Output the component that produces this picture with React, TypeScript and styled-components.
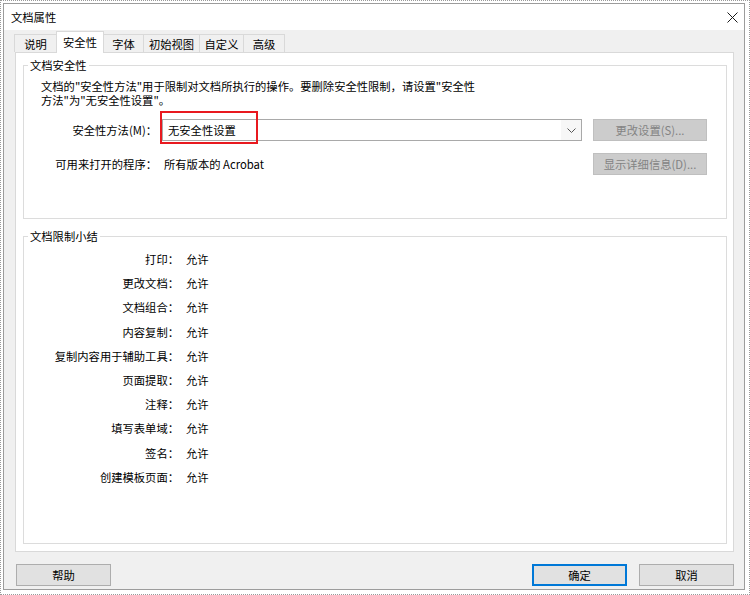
import React from 'react';
import styled, {createGlobalStyle} from "styled-components";

interface TabProps {
    $active?: boolean
    $width: number
}

interface ButtonProps {
    $primary?: boolean
}

const TABS = [
    {label: '说明', width: 43},
    {label: '安全性', width: 48, active: true},
    {label: '字体', width: 41},
    {label: '初始视图', width: 57},
    {label: '自定义', width: 45},
    {label: '高级', width: 42},
]

const RESTRICTIONS = [
    '打印',
    '更改文档',
    '文档组合',
    '内容复制',
    '复制内容用于辅助工具',
    '页面提取',
    '注释',
    '填写表单域',
    '签名',
    '创建模板页面',
]

const App = () => {
    return (
        <Frame>
            <GlobalStyle/>
            <Window>
                <TitleBar>
                    <Title>文档属性</Title>
                    <CloseButton>
                        <svg width="11" height="11" viewBox="0 0 11 11">
                            <path d="M0.5 0.5 L10.5 10.5 M10.5 0.5 L0.5 10.5" stroke="#1a1a1a" strokeWidth="1"/>
                        </svg>
                    </CloseButton>
                </TitleBar>
                <Body>
                    <TabStrip>
                        {
                            TABS.map((tab) => (
                                <Tab key={tab.label} $active={tab.active} $width={tab.width}>{tab.label}</Tab>
                            ))
                        }
                    </TabStrip>
                    <Panel>
                        <GroupBox>
                            <GroupTitle>文档安全性</GroupTitle>
                            <Description>
                                文档的"安全性方法"用于限制对文档所执行的操作。要删除安全性限制，请设置"安全性<br/>
                                方法"为"无安全性设置"。
                            </Description>
                            <SettingsGrid>
                                <FieldLabel>安全性方法(M)：</FieldLabel>
                                <ComboWrap>
                                    <ComboBox>
                                        <ComboText>无安全性设置</ComboText>
                                        <ComboArrow>
                                            <svg width="9" height="5" viewBox="0 0 9 5">
                                                <path d="M0.5 0.5 L4.5 4.5 L8.5 0.5" stroke="#555" strokeWidth="1" fill="none"/>
                                            </svg>
                                        </ComboArrow>
                                    </ComboBox>
                                    <Highlight/>
                                </ComboWrap>
                                <SideButton disabled>更改设置(S)...</SideButton>
                                <FieldLabel>可用来打开的程序：</FieldLabel>
                                <FieldValue>所有版本的 Acrobat</FieldValue>
                                <SideButton disabled>显示详细信息(D)...</SideButton>
                            </SettingsGrid>
                        </GroupBox>
                        <SummaryBox>
                            <GroupTitle>文档限制小结</GroupTitle>
                            <SummaryGrid>
                                {
                                    RESTRICTIONS.map((item) => (
                                        <React.Fragment key={item}>
                                            <SummaryLabel>{item}：</SummaryLabel>
                                            <SummaryValue>允许</SummaryValue>
                                        </React.Fragment>
                                    ))
                                }
                            </SummaryGrid>
                        </SummaryBox>
                    </Panel>
                    <ButtonRow>
                        <DialogButton>帮助</DialogButton>
                        <Spacer/>
                        <DialogButton $primary>确定</DialogButton>
                        <DialogButton>取消</DialogButton>
                    </ButtonRow>
                </Body>
            </Window>
        </Frame>
    );
};

export default App;

const GlobalStyle = createGlobalStyle`
* {
    box-sizing: border-box;
}
body {
    margin: 0;
    background: #ffffff;
    font-family: "Noto Sans CJK SC", "Noto Sans", sans-serif;
    font-size: 11.3px;
    color: #000000;
}
`

const Frame = styled.div`
display: flex;
flex-direction: column;
width: 750px;
height: 595px;
border: 1px dotted #9a9a9a;
padding: 2px 4px 4px 2px;
background: #ffffff;
`

const Window = styled.div`
flex: 1;
display: flex;
flex-direction: column;
border: 1px solid #9c9c9c;
background: #ffffff;
`

const TitleBar = styled.div`
display: flex;
align-items: center;
height: 26px;
padding: 0 6px 0 7px;
background: #ffffff;
`

const Title = styled.div`
flex: 1;
line-height: 16px;
`

const CloseButton = styled.div`
display: flex;
align-items: center;
justify-content: center;
width: 11px;
height: 11px;
`

const Body = styled.div`
flex: 1;
display: flex;
flex-direction: column;
padding: 4px 10px 3px 11px;
background: #f0f0f0;
`

const TabStrip = styled.div`
display: flex;
align-items: flex-end;
height: 18px;
margin-left: -1px;
`

const Tab = styled.div<TabProps>`
display: flex;
align-items: center;
justify-content: center;
width: ${({$width}) => $width}px;
margin-left: -1px;
border: 1px solid #d9d9d9;
border-bottom: none;
line-height: 16px;
white-space: nowrap;
&:first-child {
    margin-left: 0;
}
${({$active}) => $active ? ({
    position: 'relative',
    zIndex: 1,
    height: '22px',
    marginBottom: '-1px',
    paddingBottom: '2px',
    background: '#ffffff',
}) : ({
    height: '18px',
    background: '#f0f0f0',
})};
`

const Panel = styled.div`
flex: 1;
display: flex;
flex-direction: column;
padding: 4px 6px 7px 7px;
border: 1px solid #d9d9d9;
background: #ffffff;
`

const GroupBox = styled.fieldset`
margin: 0;
min-width: 0;
padding: 7px 0 43px 0;
border: 1px solid #dcdcdc;
`

const SummaryBox = styled(GroupBox)`
flex: 1;
margin-top: 9px;
padding: 3px 0 0 0;
`

const GroupTitle = styled.legend`
margin-left: 4px;
padding: 0 2px;
line-height: 16px;
`

const Description = styled.div`
margin-left: 17px;
line-height: 13.5px;
white-space: nowrap;
`

const SettingsGrid = styled.div`
display: grid;
grid-template-columns: 121px 431px 114px;
grid-auto-rows: 22px;
row-gap: 12px;
align-items: center;
margin: 12px 0 0 17px;
`

const FieldLabel = styled.div`
text-align: right;
white-space: nowrap;
margin-right: 5px;
`

const FieldValue = styled.div`
padding-left: 2px;
`

const ComboWrap = styled.div`
position: relative;
width: 420px;
height: 22px;
`

const ComboBox = styled.div`
display: flex;
align-items: center;
height: 22px;
border: 1px solid #a9a9a9;
background: #ffffff;
`

const ComboText = styled.div`
flex: 1;
padding-left: 5px;
`

const ComboArrow = styled.div`
display: flex;
align-items: center;
justify-content: center;
width: 20px;
height: 100%;
background: #f7f7f7;
`

const Highlight = styled.div`
position: absolute;
left: -2px;
top: -8px;
width: 98px;
height: 33px;
border: 2px solid #e8191f;
pointer-events: none;
`

const SideButton = styled.button`
height: 22px;
padding: 0;
border: 1px solid #bfbfbf;
background: #cccccc;
color: #838383;
font-family: inherit;
font-size: 11.3px;
`

const SummaryGrid = styled.div`
display: grid;
grid-template-columns: 147px auto;
grid-auto-rows: 24.2px;
column-gap: 15px;
align-items: center;
`

const SummaryLabel = styled.div`
text-align: right;
white-space: nowrap;
margin-right: -8px;
`

const SummaryValue = styled.div`
`

const ButtonRow = styled.div`
display: flex;
gap: 12px;
height: 22px;
margin-top: 12px;
padding-left: 1px;
`

const Spacer = styled.div`
flex: 1;
`

const DialogButton = styled.button<ButtonProps>`
width: 95px;
height: 22px;
padding: 0;
background: #e1e1e1;
color: #000000;
font-family: inherit;
font-size: 11.3px;
${({$primary}: ButtonProps) => $primary ? ({
    border: '2px solid #0078d7',
}) : ({
    border: '1px solid #adadad',
})};
`
